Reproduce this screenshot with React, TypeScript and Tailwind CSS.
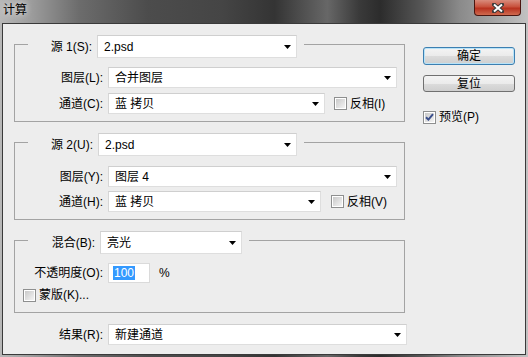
import React from 'react';

const Arrow = () => (
  <svg width="7" height="4" viewBox="0 0 7 4" className="shrink-0">
    <path d="M0 0H7L3.5 4Z" fill="#000" />
  </svg>
);

const Select = ({ value, className }: { value: string; className: string }) => (
  <div className={`flex items-center justify-between bg-white border border-[#dedede] border-t-[#cfcfcf] border-l-[#d6d6d6] pl-[6px] pr-[5px] ${className}`}>
    <span>{value}</span>
    <Arrow />
  </div>
);

const Check = ({ checked = false }: { checked?: boolean }) => (
  <span className="w-[13px] h-[13px] border border-[#8e8f8f] bg-white p-[1px] flex shrink-0">
    <span className="flex-1 flex items-center justify-center bg-linear-to-br from-[#c9c9c9] to-[#f4f4f4]">
      {checked && (
        <svg width="9" height="8" viewBox="0 0 9 8">
          <path d="M1 4.2L3.4 6.6L8 1.2" stroke="#3b4f8c" strokeWidth="2" fill="none" />
        </svg>
      )}
    </span>
  </span>
);

const Row = ({ label, children }: { label: string; children: React.ReactNode }) => (
  <div className="flex items-center gap-[5px]">
    <span className="w-[88px] text-right">{label}</span>
    {children}
  </div>
);

const App: React.FC = () => {
  return (
    <div className="w-[528px] h-[357px] flex flex-col overflow-hidden text-[12px] leading-[14px] text-black font-['Liberation_Sans','Noto_Sans_CJK_SC',sans-serif] bg-[linear-gradient(90deg,#b8b8b8_0%,#9c9c9c_6%,#6c6c6c_15%,#4c4c4c_28%,#454545_42%,#343434_52%,#4e4e4e_57%,#676767_62%,#3a3a3a_68%,#2c2c2c_72%,#575757_80%,#8a8a8a_87%,#a6a6a6_94%,#c2c2c2_100%)]">
      {/* Title bar */}
      <div className="relative h-[23px] shrink-0 flex items-start pl-[3px] pt-[3px]">
        <span className="[text-shadow:0_0_6px_rgba(255,255,255,0.95)]">计算</span>
        <div className="absolute top-0 right-[7px] w-[47px] h-[16px] rounded-b-[4px] border border-t-0 border-[#4a1610] bg-[linear-gradient(#d98c7c,#c8513c_45%,#b8321f_55%,#cf6a4f)] flex items-center justify-center">
          <svg width="12" height="10" viewBox="0 0 12 10">
            <path d="M2 1.5L10 8.5M10 1.5L2 8.5" stroke="#3a3a3a" strokeWidth="4" strokeLinecap="square" />
            <path d="M2 1.5L10 8.5M10 1.5L2 8.5" stroke="#fff" strokeWidth="2" />
          </svg>
        </div>
      </div>

      {/* Dialog body */}
      <div className="mx-[2px] h-[332px] border border-[#3a3a3a] bg-[#ededed] flex">
        <div className="w-[409px] pl-[11px] pt-[7px] shrink-0">
          {/* Source 1 */}
          <fieldset className="w-[391px] border border-[#a3a3a3] pt-[9px] pb-[7px]">
            <legend className="ml-[13px] pt-[4px] pr-[7px] bg-[#ededed]">
              <div className="flex items-center gap-[5px]">
                <span className="w-[64px] text-right">源 1(S):</span>
                <Select value="2.psd" className="w-[200px] h-[23px]" />
              </div>
            </legend>
            <div className="flex flex-col gap-[5px]">
              <Row label="图层(L):">
                <Select value="合并图层" className="w-[289px] h-[21px]" />
              </Row>
              <Row label="通道(C):">
                <Select value="蓝 拷贝" className="w-[217px] h-[21px]" />
                <span className="ml-[4px] flex items-center gap-[3px]">
                  <Check />
                  <span>反相(I)</span>
                </span>
              </Row>
            </div>
          </fieldset>

          {/* Source 2 */}
          <fieldset className="mt-[7px] w-[391px] border border-[#a3a3a3] pt-[10px] pb-[7px]">
            <legend className="ml-[13px] pt-[4px] pr-[7px] bg-[#ededed]">
              <div className="flex items-center gap-[5px]">
                <span className="w-[65px] text-right">源 2(U):</span>
                <Select value="2.psd" className="w-[199px] h-[23px]" />
              </div>
            </legend>
            <div className="flex flex-col gap-[4px]">
              <Row label="图层(Y):">
                <Select value="图层 4" className="w-[289px] h-[21px]" />
              </Row>
              <Row label="通道(H):">
                <Select value="蓝 拷贝" className="w-[213px] h-[21px]" />
                <span className="ml-[5px] flex items-center gap-[3px]">
                  <Check />
                  <span>反相(V)</span>
                </span>
              </Row>
            </div>
          </fieldset>

          {/* Blending */}
          <fieldset className="mt-[7px] w-[391px] border border-[#a3a3a3] pt-[9px] pb-[10px]">
            <legend className="ml-[13px] pt-[4px] pr-[7px] bg-[#ededed]">
              <div className="flex items-center gap-[5px]">
                <span className="w-[67px] text-right">混合(B):</span>
                <Select value="亮光" className="w-[142px] h-[23px]" />
              </div>
            </legend>
            <div className="flex flex-col gap-[5px]">
              <Row label="不透明度(O):">
                <div className="w-[42px] h-[20px] bg-white border border-[#dadada] flex items-center pl-[4px]">
                  <span className="bg-[#3399ff] text-white px-[1px]">100</span>
                </div>
                <span className="ml-[4px]">%</span>
              </Row>
              <div className="pl-[8px] flex items-center gap-[3px]">
                <Check />
                <span>蒙版(K)...</span>
              </div>
            </div>
          </fieldset>

          {/* Result */}
          <div className="mt-[11px] flex items-center gap-[5px]">
            <span className="w-[89px] text-right">结果(R):</span>
            <Select value="新建通道" className="w-[299px] h-[21px]" />
          </div>
        </div>

        {/* Buttons */}
        <div className="pl-[11px] pt-[23px] flex flex-col">
          <button className="w-[92px] h-[18px] rounded-[3px] border border-[#3c7fb1] shadow-[inset_0_0_0_1px_#b8e3f8] bg-[linear-gradient(#f4f4f4,#ebebeb_50%,#dcdcdc_50%,#cfcfcf)] leading-[14px]">
            确定
          </button>
          <button className="mt-[10px] w-[92px] h-[17px] rounded-[3px] border border-[#707070] bg-[linear-gradient(#f4f4f4,#ebebeb_50%,#dcdcdc_50%,#cfcfcf)] leading-[14px]">
            复位
          </button>
          <div className="mt-[18px] flex items-center gap-[3px]">
            <Check checked />
            <span>预览(P)</span>
          </div>
        </div>
      </div>
    </div>
  );
};

export default App;
